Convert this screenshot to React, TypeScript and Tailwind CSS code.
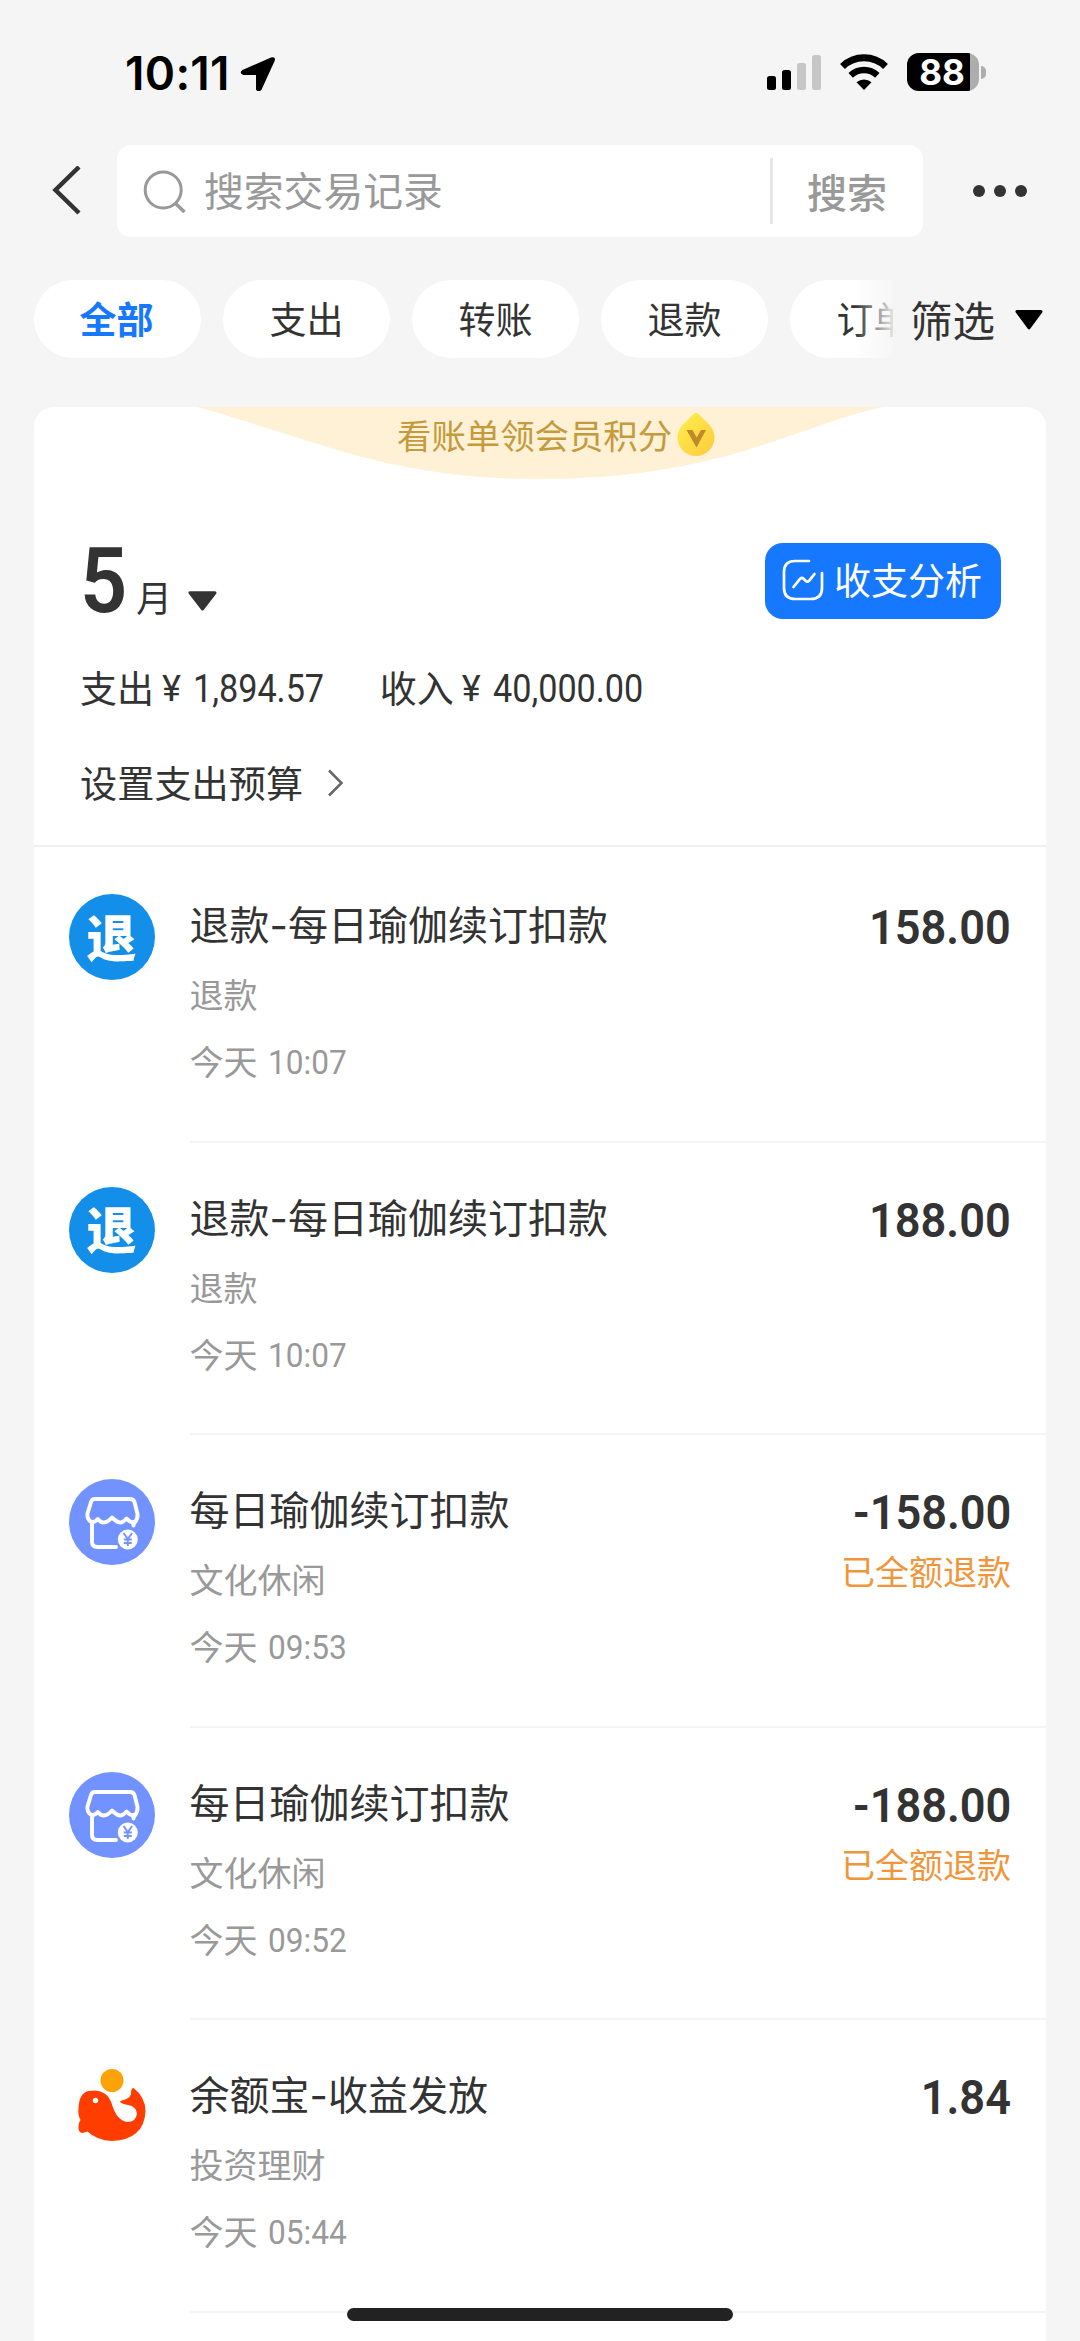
import { clsx } from 'clsx';

type IconKind = 'refund' | 'shop' | 'fund';

interface Bill {
  icon: IconKind;
  title: string;
  category: string;
  time: string;
  amount: string;
  status?: string;
}

const TABS = ['全部', '支出', '转账', '退款', '订单'];

const BILLS: Bill[] = [
  { icon: 'refund', title: '退款-每日瑜伽续订扣款', category: '退款', time: '10:07', amount: '158.00' },
  { icon: 'refund', title: '退款-每日瑜伽续订扣款', category: '退款', time: '10:07', amount: '188.00' },
  { icon: 'shop', title: '每日瑜伽续订扣款', category: '文化休闲', time: '09:53', amount: '-158.00', status: '已全额退款' },
  { icon: 'shop', title: '每日瑜伽续订扣款', category: '文化休闲', time: '09:52', amount: '-188.00', status: '已全额退款' },
  { icon: 'fund', title: '余额宝-收益发放', category: '投资理财', time: '05:44', amount: '1.84' },
];

function StatusBar() {
  return (
    <div className="flex h-[145px] items-start justify-between pt-[53px] pr-[94px] pl-[125px]">
      <div className="flex items-center">
        <span className="w-[115px] font-['Inter'] text-[46px] leading-[40px] font-semibold tracking-[0.3px] text-black">
          10:11
        </span>
        <svg className="h-[36px] w-[36px]" viewBox="0 0 36 36">
          <path
            d="M2.500 15 31 2.400Q36.200 1.200 34.600 6L21.600 34.500Q18.600 38.600 16 34.500V20H3.200Q-1.400 18 2.500 15Z"
            fill="#000"
          />
        </svg>
      </div>
      <div className="flex items-start">
        <svg className="h-[38px] w-[56px]" viewBox="0 0 56 38">
          <rect x="0" y="23" width="9" height="14" rx="2.500" fill="#000" />
          <rect x="15" y="17" width="9" height="20" rx="2.500" fill="#000" />
          <rect x="30" y="10" width="9" height="27" rx="2.500" fill="#c6c6c6" />
          <rect x="45" y="2" width="9" height="35" rx="2.500" fill="#c6c6c6" />
        </svg>
        <svg className="ml-[17px] h-[38px] w-[48px]" viewBox="0 0 48 38">
          <path d="M2.500 13.500a31 31 0 0 1 43 0" fill="none" stroke="#000" strokeWidth="7" />
          <path d="M10.700 22.300a19.500 19.500 0 0 1 26.600 0" fill="none" stroke="#000" strokeWidth="6.500" />
          <path d="M16.500 29.300a11.500 11.500 0 0 1 15 0L24 37Z" fill="#000" />
        </svg>
        <div className="ml-[19px] flex items-center">
          <div className="flex h-[38px] w-[72px] overflow-hidden rounded-[12px] bg-[#adadad]">
            <div className="flex h-full w-[63px] items-center justify-center bg-black pl-[7px] font-['Inter'] text-[35px] leading-[38px] font-bold text-white">
              88
            </div>
          </div>
          <div className="ml-[2px] h-[13px] w-[5px] rounded-r-full bg-[#adadad]" />
        </div>
      </div>
    </div>
  );
}

function SearchBar() {
  return (
    <div className="flex h-[92px] items-center">
      <svg className="ml-[50px] h-[50px] w-[34px]" viewBox="0 0 34 50">
        <path d="M29 1 5.500 24 29 47" fill="none" stroke="#333" strokeWidth="4.500" />
      </svg>
      <div className="ml-[33px] flex h-full w-[806px] items-center rounded-[14px] bg-white">
        <svg className="ml-[26px] h-[44px] w-[44px]" viewBox="0 0 44 44">
          <circle cx="20.200" cy="21" r="18" fill="none" stroke="#999" strokeWidth="3" />
          <path d="m32 34 9.500 9" fill="none" stroke="#999" strokeWidth="3.500" />
        </svg>
        <span className="ml-[17px] pb-[4px] text-[39.800px] leading-[40px] text-[#999]">搜索交易记录</span>
        <div className="ml-auto h-[66px] w-[3px] bg-[#e6e6e6]" />
        <span className="mr-[36px] ml-[34px] text-[40px] leading-[40px] font-medium text-[#999]">搜索</span>
      </div>
      <div className="ml-[50px] flex gap-[9px]">
        <i className="size-[12px] rounded-full bg-[#333]" />
        <i className="size-[12px] rounded-full bg-[#333]" />
        <i className="size-[12px] rounded-full bg-[#333]" />
      </div>
    </div>
  );
}

function FilterTabs() {
  return (
    <div className="mt-[43px] flex h-[78px] items-center">
      <div className="relative flex h-full w-[893px] gap-[22px] overflow-hidden pl-[34px]">
        {TABS.map((tab, i) => (
          <div
            key={tab}
            className={clsx(
              'flex h-full w-[167px] shrink-0 items-center justify-center rounded-full bg-white text-[37px]',
              i === 0 ? 'pr-[2px] font-bold text-[#1677ff]' : 'text-[#333]',
            )}
          >
            {tab}
          </div>
        ))}
        <div className="absolute inset-y-0 right-0 w-[38px] bg-gradient-to-r from-[#f5f5f5]/0 to-[#f5f5f5]/90" />
      </div>
      <span className="ml-[17px] text-[42.500px] leading-[42px] text-[#333]">筛选</span>
      <svg className="mt-[2px] ml-[19px] h-[22px] w-[30px]" viewBox="0 0 30 22">
        <path d="M3 2.500h24L15 18.800Z" fill="#000" stroke="#000" strokeWidth="3" strokeLinejoin="round" />
      </svg>
    </div>
  );
}

function PointsBanner() {
  return (
    <div className="relative h-[72px]">
      <svg className="absolute top-0 left-[151px] h-[73px] w-[710px]" viewBox="0 0 710 73">
        <path d="M12 0C40 7 95 26 152 43C225 65 290 72 356 72C420 72 490 65 562 43C620 25 660 8 698 0Z" fill="#fff1d6" />
      </svg>
      <div className="absolute top-[4px] left-[363px] flex items-center">
        <span className="text-[34.400px] leading-[46px] text-[#c59a3c]">看账单领会员积分</span>
        <svg className="mt-[2px] ml-[5px] h-[44px] w-[38px]" viewBox="0 0 38 44">
          <defs>
            <linearGradient id="drop" x1="0" y1="0" x2="1" y2="1">
              <stop offset="0" stopColor="#fff04a" />
              <stop offset="1" stopColor="#ffc940" />
            </linearGradient>
          </defs>
          <path d="M19 0Q21 0 24 3.500L31 10.500A18.500 18.500 0 1 1 7 10.500L14 3.500Q17 0 19 0Z" fill="url(#drop)" />
          <path d="M9.500 17h6l4.200 7.500L24 17h5l-9.500 17.500Z" fill="#c08a28" />
        </svg>
      </div>
    </div>
  );
}

function Summary() {
  return (
    <div className="flex h-[368px] flex-col border-b-2 border-[#f0f0f0] pr-[46px] pl-[46px] text-[#333]">
      <div className="flex justify-between pt-[64px]">
        <div className="flex items-end">
          <span className="inline-block h-[75px] w-[56px] origin-left scale-x-[0.92] font-['Roboto'] text-[90px] leading-[75px] font-semibold">5</span>
          <span className="pb-[4px] text-[36px] leading-[38px]">月</span>
          <svg className="mb-[8px] ml-[16px] h-[20px] w-[29px]" viewBox="0 0 29 20">
            <path d="M2 1.800h25L14.500 18Z" fill="#333" stroke="#333" strokeWidth="3" strokeLinejoin="round" />
          </svg>
        </div>
        <div className="mr-[-1px] flex h-[76px] w-[236px] items-center rounded-[18px] bg-[#1677ff] pl-[17px] text-white">
          <svg className="mb-[3px] size-[42px]" viewBox="0 0 42 42" fill="none" stroke="#fff" strokeWidth="2.700" strokeLinecap="round">
            <path d="M27 2H13Q2 2 2 13V29Q2 40 13 40H29Q40 40 40 29V14" />
            <path d="m11.500 28 6.500-8q1.800-2 3.600-.2l2.200 2.200q1.800 1.600 3.400-.4L32.500 15" />
          </svg>
          <span className="mb-[4px] ml-[10px] text-[37px] leading-[40px]">收支分析</span>
        </div>
      </div>
      <div className="mt-[48px] flex h-[42px] items-center text-[37px]">
        <span className="w-[82px]">支出</span>
        <Money value="1,894.57" />
        <span className="ml-[41px] w-[82px]">收入</span>
        <Money value="40,000.00" />
      </div>
      <div className="mt-[53px] flex h-[42px] items-center text-[37.200px]">
        设置支出预算
        <svg className="ml-[24px] h-[28px] w-[18px]" viewBox="0 0 18 28">
          <path d="M2 1.500 14.500 14 2 26.500" fill="none" stroke="#666" strokeWidth="2.500" />
        </svg>
      </div>
    </div>
  );
}

function Money({ value }: { value: string }) {
  return (
    <span className="inline-flex items-center gap-[9px] pt-[2px] font-['Roboto'] text-[38px]">
      <span className="w-[22px] text-[36px]">¥</span>
      <span className="inline-block origin-left scale-x-90">{value}</span>
    </span>
  );
}

function BillIcon({ kind }: { kind: IconKind }) {
  if (kind === 'refund') {
    return (
      <div className="flex size-[86px] items-center justify-center rounded-full bg-[#138fea] pb-[5px] text-[50px] leading-[50px] font-black text-white">
        退
      </div>
    );
  }
  if (kind === 'shop') {
    return (
      <svg className="size-[86px]" viewBox="0 0 86 86">
        <circle cx="43" cy="43" r="43" fill="#7293ff" />
        <g fill="none" stroke="#fff" strokeWidth="3.900" strokeLinejoin="round" strokeLinecap="round">
          <path d="M25.500 20H61Q64.500 20 65.500 23L68.500 35Q69 40 65.500 44Q61 43.500 57.500 39.500Q54 43.500 51.500 43.500Q48 43.500 43 38.500Q38.500 43.500 34.800 43.500Q31.500 43.500 28.800 40Q26 43.500 22.500 43Q17.500 40 18.500 34.500L22 23Q23 20 25.500 20Z" />
          <path d="M23 45V63Q23 68 28.500 68H47" />
          <path d="M64.500 43v3.500" />
        </g>
        <circle cx="58.800" cy="60.500" r="10" fill="#fff" />
        <path d="m54.500 54 4.300 6 4.300-6M58.800 60v7M54.800 60.500h8M54.800 64h8" fill="none" stroke="#7293ff" strokeWidth="1.900" />
      </svg>
    );
  }
  return (
    <svg className="size-[86px]" viewBox="0 0 86 86">
      <circle cx="43" cy="16.500" r="11.500" fill="#ffa208" />
      <path
        d="M20 27Q29 25 35.500 29.500Q41 33 43.500 42Q48 56.500 58.500 58Q67 58 68 49.500Q67.500 42.500 59 41Q54 40 51.500 38.500Q50.500 37 53 36.500Q60 35 62 30.500Q62 23.500 64.500 24Q76.500 33 76.500 47.500Q75 75.500 43 77Q28 76.500 18.500 67.500L13.500 69Q9 69 9.500 62.500Q9.500 58.500 11.500 56Q8.500 50.500 9.500 44.500Q10 28.500 20 27Z"
        fill="#ff3d00"
      />
      <circle cx="26.500" cy="36.500" r="2.700" fill="#fff" />
    </svg>
  );
}

function BillRow({ bill }: { bill: Bill }) {
  return (
    <div className="flex h-[292.600px] pl-[34.500px]">
      <div className="pt-[44px]">
        <BillIcon kind={bill.icon} />
      </div>
      <div className="ml-[35px] flex flex-1 justify-between border-b-2 border-[#f4f4f4] pr-[35px]">
        <div className="flex flex-col pt-[54px]">
          <span className="font-['Inter','Noto_Sans_CJK_SC'] text-[40px] leading-[44px] text-[#333]">{bill.title}</span>
          <span className="mt-[27px] text-[34px] leading-[38px] text-[#999]">{bill.category}</span>
          <span className="mt-[29px] flex text-[34px] leading-[38px] text-[#999]">
            今天
            <span className="mt-px ml-[10px] inline-block origin-left scale-x-[0.93] font-['Roboto']">{bill.time}</span>
          </span>
        </div>
        <div className="flex flex-col items-end pt-[54px]">
          <span className="inline-block origin-right scale-x-[0.94] font-['Roboto'] text-[48px] leading-[48px] font-semibold text-[#333]">
            {bill.amount}
          </span>
          {bill.status && <span className="mt-[15px] text-[34px] leading-[38px] text-[#f0963a]">{bill.status}</span>}
        </div>
      </div>
    </div>
  );
}

export default function App() {
  return (
    <div className="relative flex h-[2341px] w-[1080px] flex-col overflow-hidden bg-[#f5f5f5] font-['Noto_Sans_CJK_SC',sans-serif]">
      <StatusBar />
      <SearchBar />
      <FilterTabs />
      <main className="mt-[49px] ml-[34px] w-[1012px] flex-1 overflow-hidden rounded-t-[20px] bg-white">
        <PointsBanner />
        <Summary />
        <div className="pt-[3px]">
          {BILLS.map((bill, i) => (
            <BillRow key={i} bill={bill} />
          ))}
        </div>
      </main>
      {/* home indicator */}
      <div className="absolute bottom-[20px] left-[347px] h-[13px] w-[386px] rounded-full bg-[#222]" />
    </div>
  );
}
